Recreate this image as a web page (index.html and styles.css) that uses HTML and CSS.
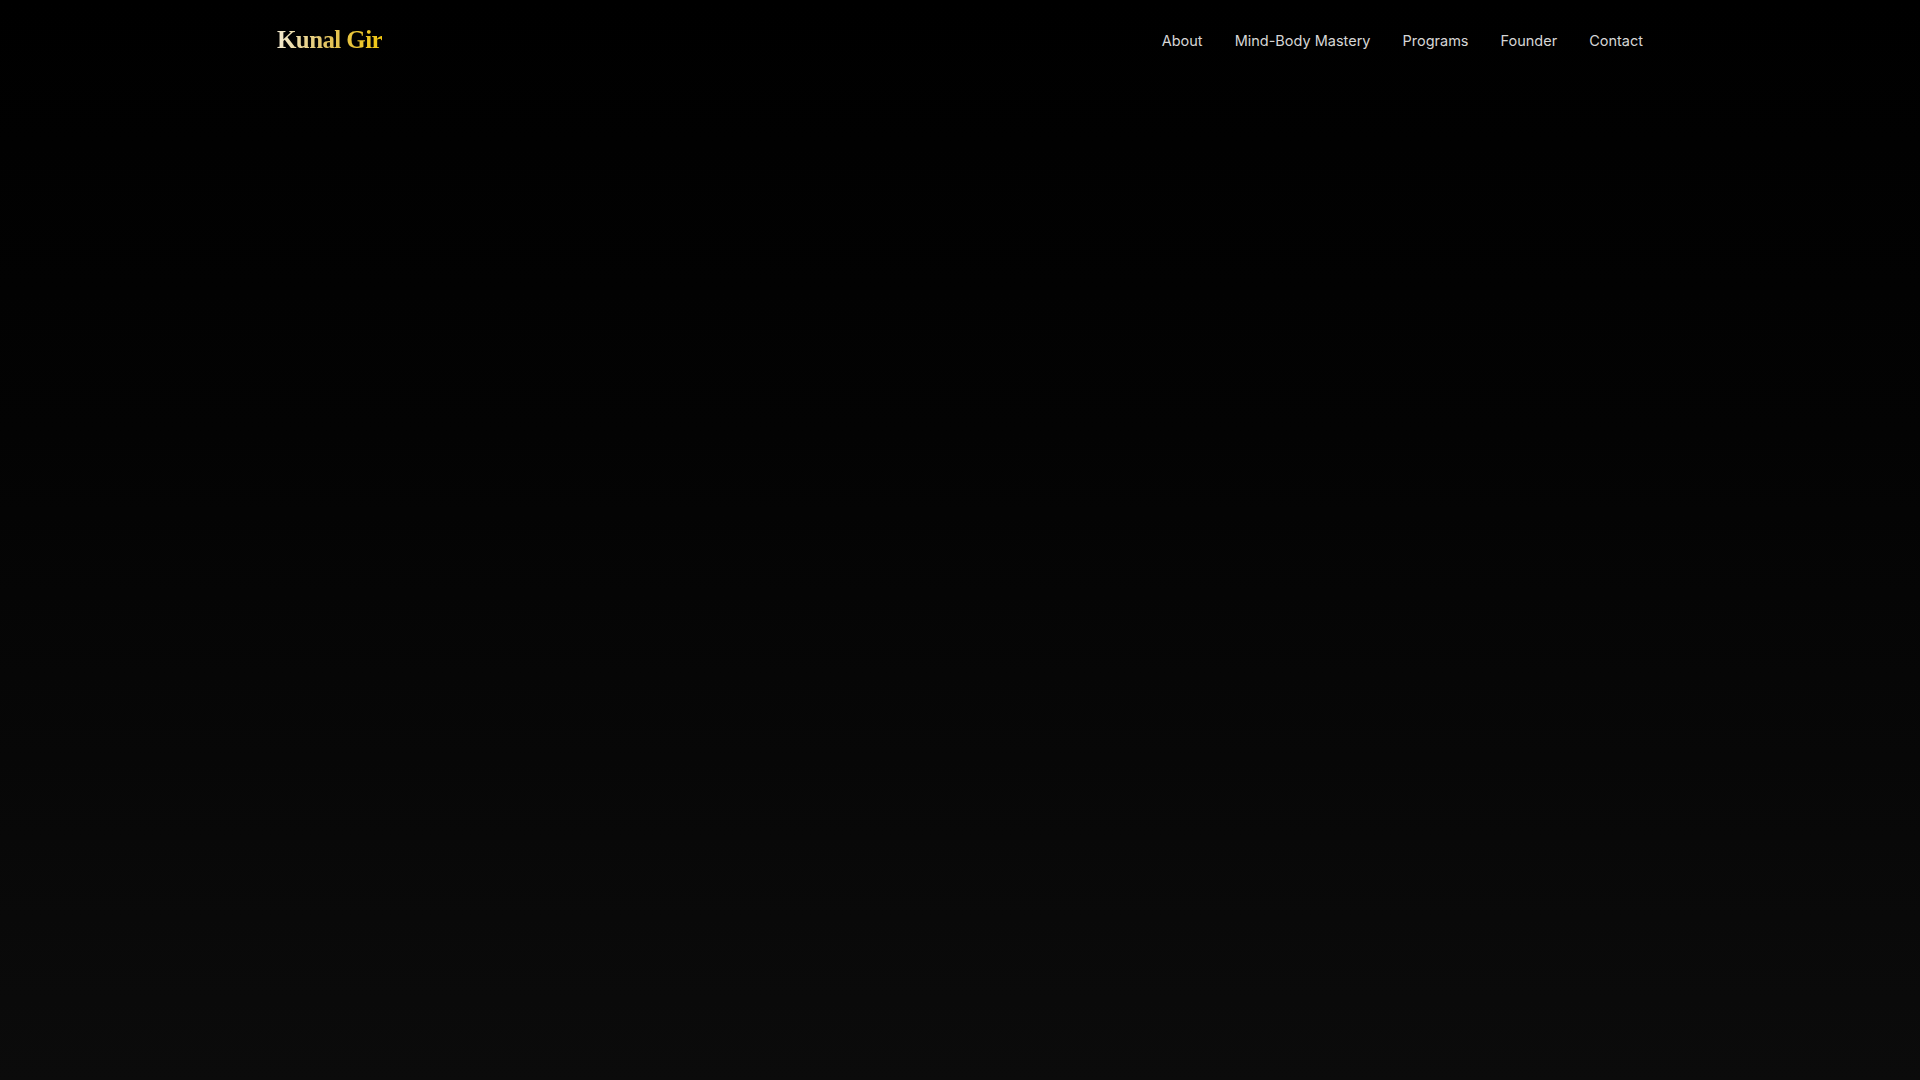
FILE: index.html
```html
<!DOCTYPE html>
<html lang="en">
<head>
<meta charset="utf-8">
<title>Kunal Gir</title>
<link rel="stylesheet" href="styles.css">
</head>
<body>
<header class="site-header">
  <div class="container header-inner">
    <a class="logo" href="#">Kunal Gir</a>
    <nav class="nav">
      <a href="#">About</a>
      <a href="#">Mind-Body Mastery</a>
      <a href="#">Programs</a>
      <a href="#">Founder</a>
      <a href="#">Contact</a>
    </nav>
  </div>
</header>
<main class="hero"></main>
</body>
</html>
```
FILE: styles.css
```css
* { box-sizing: border-box; }
html, body { margin: 0; padding: 0; }
body {
  min-height: 100vh;
  background: linear-gradient(180deg, #000000 0%, #030303 40%, #0b0b0b 100%);
  font-family: "Inter", "Open Sans", sans-serif;
  color: #d4d4d4;
}
.container {
  max-width: 1400px;
  margin: 0 auto;
  padding: 0 17px;
}
.header-inner {
  display: flex;
  align-items: center;
  justify-content: space-between;
  height: 80px;
}
.logo {
  font-family: "Liberation Serif", "DejaVu Serif", serif;
  font-weight: 700;
  font-size: 25px;
  letter-spacing: -0.6px;
  text-decoration: none;
  background: linear-gradient(90deg, #f3ead0 0%, #e2c25a 50%, #f2c811 100%);
  -webkit-background-clip: text;
  background-clip: text;
  color: transparent;
}
.nav {
  display: flex;
  gap: 32px;
}
.nav a {
  color: #d6d6d6;
  text-decoration: none;
  font-size: 14.5px;
  font-weight: 400;
}
.hero { height: 1000px; }
```
